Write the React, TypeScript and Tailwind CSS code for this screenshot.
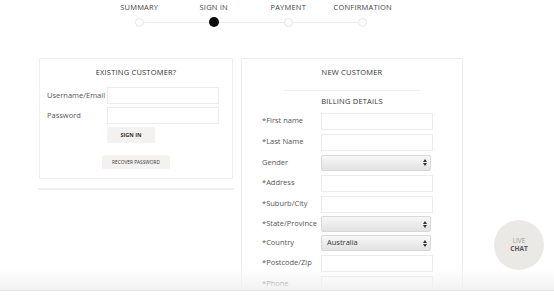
import React from "react";

const font = { fontFamily: '"Open Sans", "Liberation Sans", sans-serif' };

function Step({ label, active }: { label: string; active?: boolean }) {
  return (
    <div className="flex w-[74.5px] flex-col items-center">
      <div className="h-[14px] pt-[2px] text-[7.5px] leading-[10px] tracking-[0.2px] text-[#444]">{label}</div>
      <div className="mt-[3px] flex h-[10px] items-center justify-center">
        {active ? (
          <div className="h-[10px] w-[10px] rounded-full bg-[#0a0a0a]" />
        ) : (
          <div className="h-[9px] w-[9px] rounded-full border border-[#e6e6e6] bg-white" />
        )}
      </div>
    </div>
  );
}

function Input() {
  return <div className="h-[17px] w-[112px] border border-[#ececec] bg-white" />;
}

function Select({ value }: { value?: string }) {
  return (
    <div className="flex h-[16px] w-[110px] items-center justify-between rounded-[2px] border border-[#d8d8d8] bg-gradient-to-b from-[#f7f7f7] to-[#e2e2e2] pl-[5px] pr-[3px]">
      <span className="text-[7.5px] text-[#333]">{value ?? ""}</span>
      <svg width="4" height="7" viewBox="0 0 4 7">
        <path d="M0 3 L2 0 L4 3 Z" fill="#333" />
        <path d="M0 4 L2 7 L4 4 Z" fill="#333" />
      </svg>
    </div>
  );
}

function Row({ label, children, h = 21 }: { label: string; children: React.ReactNode; h?: number }) {
  return (
    <div className="flex items-center" style={{ height: h }}>
      <div className="w-[59px] text-[7.5px] text-[#555]">{label}</div>
      {children}
    </div>
  );
}

export default function App() {
  return (
    <div className="relative h-[295px] w-[554px] overflow-hidden bg-white" style={font}>
      {/* stepper */}
      <div className="relative ml-[102px] flex w-[298px]">
        <div className="absolute left-[43px] right-[42px] top-[22px] h-px bg-[#ececec]" />
        <div className="relative flex">
          <Step label="SUMMARY" />
          <Step label="SIGN IN" active />
          <Step label="PAYMENT" />
          <Step label="CONFIRMATION" />
        </div>
      </div>

      <div className="ml-[38px] mt-[31px] flex gap-[7px]">
        {/* left column */}
        <div className="w-[196px]">
          <div className="ml-px h-[121px] w-[194px] border border-[#efefef] pt-[8px]">
            <div className="text-center text-[7.5px] tracking-[0.2px] text-[#333]">EXISTING CUSTOMER?</div>
            <div className="mt-[9px] flex flex-col gap-[3px] pl-[7px]">
              <div className="flex items-center">
                <div className="w-[60px] text-[7.5px] text-[#555]">Username/Email</div>
                <Input />
              </div>
              <div className="flex items-center">
                <div className="w-[60px] text-[7.5px] text-[#555]">Password</div>
                <Input />
              </div>
              <div className="flex pl-[60px]">
                <div className="flex h-[16px] w-[48px] items-center justify-center bg-[#f3f2f0] text-[5.5px] font-bold text-[#333]">
                  SIGN IN
                </div>
              </div>
            </div>
            <div className="mt-[12px] flex pl-[62px]">
              <div className="flex h-[14px] w-[68px] items-center justify-center rounded-[2px] bg-[#f3f2f0] text-[4.8px] text-[#333]">
                RECOVER PASSWORD
              </div>
            </div>
          </div>
          <div className="mt-[9px] h-[2px] w-[196px] bg-[#eeeeee]" />
        </div>

        {/* right column */}
        <div className="h-[260px] w-[222px] border-x border-t border-[#efefef] pt-[8px]">
          <div className="text-center text-[7.5px] tracking-[0.2px] text-[#333]">NEW CUSTOMER</div>
          <div className="mx-auto mt-[12px] h-px w-[136px] bg-[#ececec]" />
          <div className="mt-[5px] text-center text-[7.5px] tracking-[0.2px] text-[#333]">BILLING DETAILS</div>
          <div className="mt-[3px] pl-[20px]">
            <Row label="*First name"><Input /></Row>
            <Row label="*Last Name"><Input /></Row>
            <Row label="Gender" h={20}><Select /></Row>
            <Row label="*Address"><Input /></Row>
            <Row label="*Suburb/City"><Input /></Row>
            <Row label="*State/Province" h={19}><Select /></Row>
            <Row label="*Country" h={19}><Select value="Australia" /></Row>
            <Row label="*Postcode/Zip"><Input /></Row>
            <Row label="*Phone"><Input /></Row>
          </div>
        </div>
      </div>

      {/* bottom fade */}
      <div className="absolute bottom-[4px] left-0 h-[22px] w-full bg-gradient-to-b from-white/0 to-[#f1f1f1]" />
      <div className="absolute bottom-[4px] left-0 h-px w-full bg-[#e4e4e4]" />
      <div className="absolute bottom-0 left-0 h-[4px] w-full bg-white" />

      {/* live chat */}
      <div className="absolute left-[494px] top-[220px] flex h-[50px] w-[50px] flex-col items-center justify-center rounded-full bg-[#ebe9e5] leading-[8px]">
        <span className="text-[6.5px] text-[#999]">LIVE</span>
        <span className="text-[6.5px] font-bold text-[#555]">CHAT</span>
      </div>
    </div>
  );
}
